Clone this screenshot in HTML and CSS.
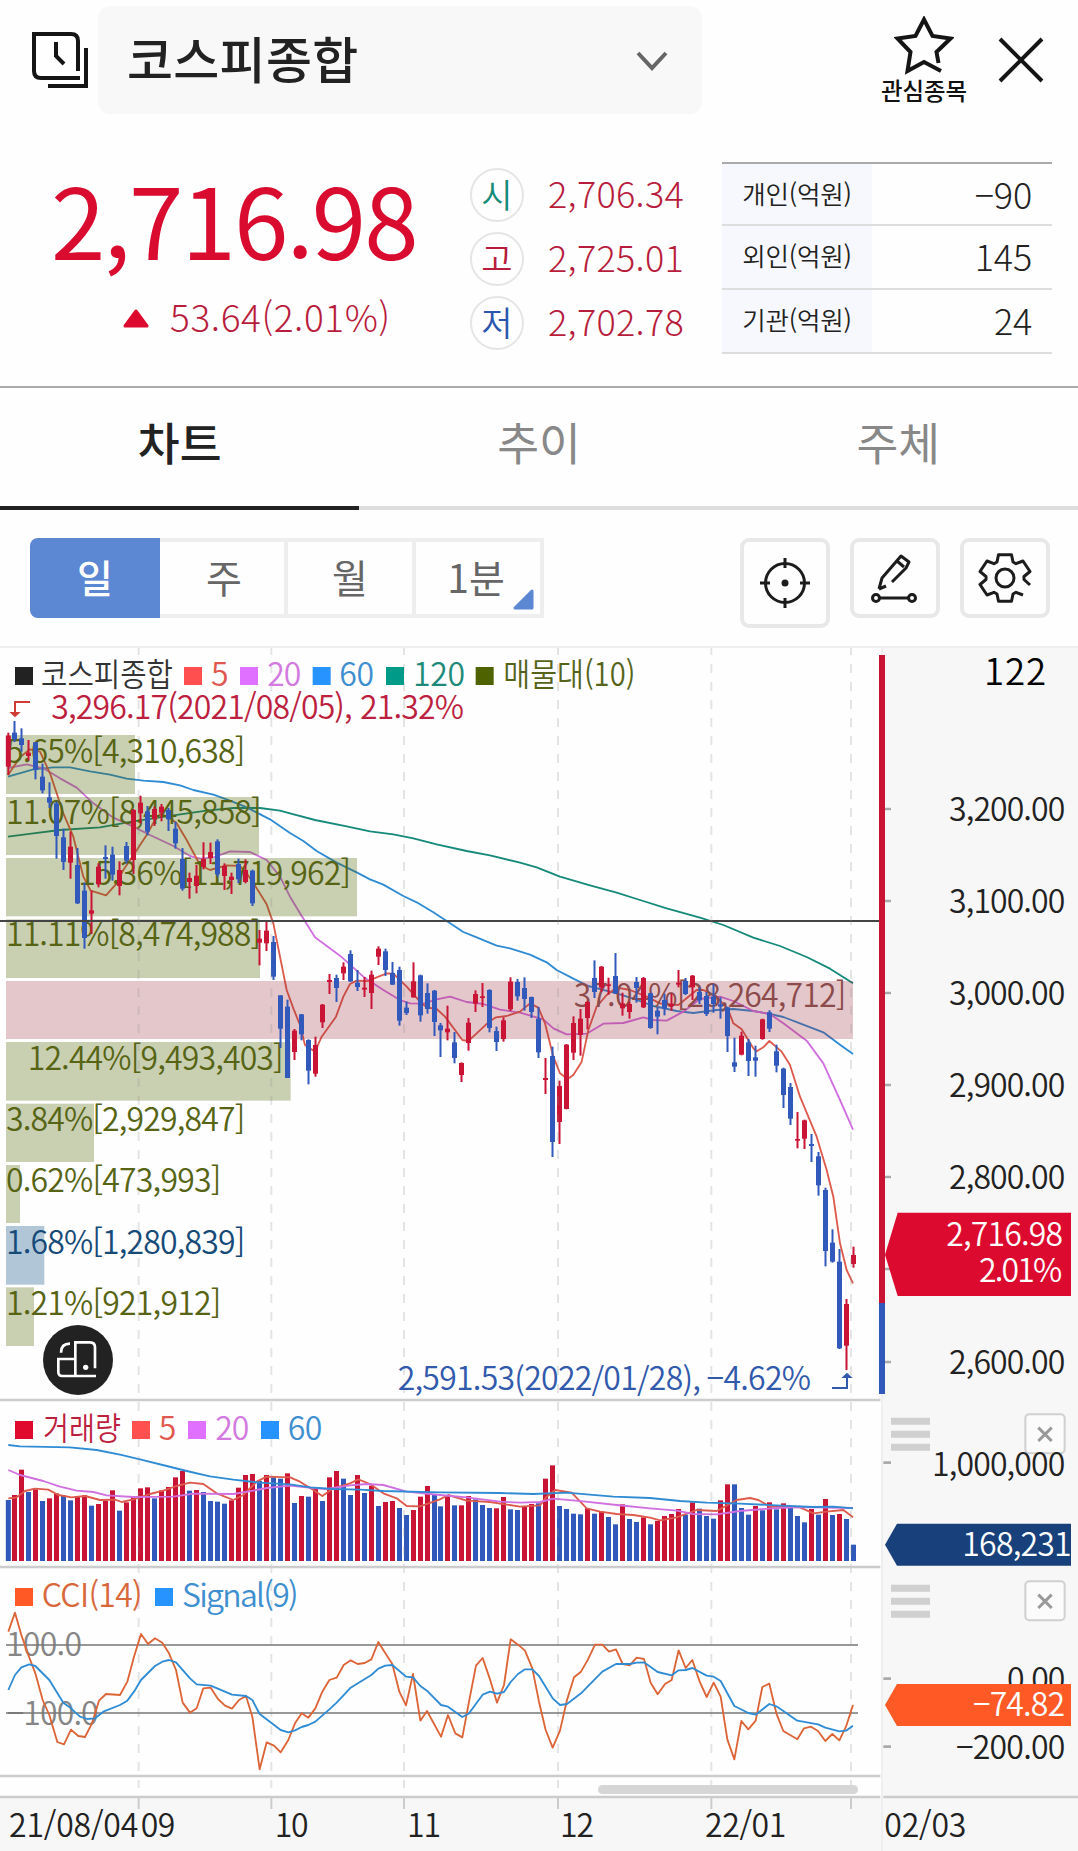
FILE: index.html
```html
<!DOCTYPE html>
<html lang="ko">
<head>
<meta charset="utf-8">
<title>코스피종합</title>
<link rel="stylesheet" href="styles.css">
</head>
<body>
<header class="topbar">
  <svg class="history" width="56" height="56" viewBox="0 0 56 56"><path d="M46 39V9Q46 2 39 2H2V39Q2 46 9 46H48M24 10V24L32 32M54 16V54H16"/></svg>
  <div class="picker"><span>코스피종합</span>
    <svg width="34" height="22" viewBox="0 0 34 22"><path d="M3 3L17 18L31 3"/></svg>
  </div>
  <div class="favorite">
    <svg width="60" height="62" viewBox="0 0 60 62"><path d="M44.500 47L42.500 36L56.500 22.500L38.500 20L30 3.500L21.500 20L3.500 22.500L16.500 36L13.500 55L30 46L47 55"/></svg>
    <span>관심종목</span>
  </div>
  <svg class="close" width="48" height="48" viewBox="0 0 48 48"><path d="M3 3L45 45M45 3L3 45"/></svg>
</header>

<section class="quote">
  <div class="price">
    <div class="now">2,716.98</div>
    <div class="change"><svg width="26" height="19" viewBox="0 0 26 19"><path d="M13 2L24 17H2Z"/></svg><span>53.64(2.01%)</span></div>
  </div>
  <ul class="ohl">
    <li><i class="open">시</i><span>2,706.34</span></li>
    <li><i class="high">고</i><span>2,725.01</span></li>
    <li><i class="low">저</i><span>2,702.78</span></li>
  </ul>
  <dl class="investors">
    <div><dt>개인(억원)</dt><dd>−90</dd></div>
    <div><dt>외인(억원)</dt><dd>145</dd></div>
    <div><dt>기관(억원)</dt><dd>24</dd></div>
  </dl>
</section>

<nav class="tabs"><a class="active">차트</a><a>추이</a><a>주체</a></nav>

<div class="tools">
  <div class="period"><b class="on">일</b><b>주</b><b>월</b><b class="minute">1분<svg width="21" height="21" viewBox="0 0 21 21"><path d="M19 2V19H2Z"/></svg></b></div>
  <div class="actions">
    <span class="tall"><svg width="52" height="52" viewBox="0 0 52 52"><circle cx="26" cy="26" r="19.500"/><circle class="dot" cx="26" cy="26" r="3.500"/><path d="M26 1V11M26 41V51M1 26H11M41 26H51"/></svg></span>
    <span><svg width="52" height="52" viewBox="0 0 52 52"><path d="M10 37L13 26L32 4L40 10L37 16L23 30M28 9L35 15M10 37L17 34M11 46H39"/><circle cx="7" cy="46" r="3.500"/><circle cx="43" cy="46" r="3.500"/></svg></span>
    <span><svg width="56" height="52" viewBox="-28 -26 56 52"><path d="M18 17L11 14.300L8 16L6.500 23.200H-6.500L-8 16L-11 14.300L-18 17L-25 6.500L-19 1.500V-1.500L-25 -6.500L-18 -17L-11 -14.300L-8 -16L-6.500 -23.200H6.500L8 -16L11 -14.300L18 -17L25 -6.500L19 -1.500V1.500L25 7"/><circle r="9"/></svg></span>
  </div>
</div>

<svg class="chart" width="1078" height="1205" viewBox="0 -12 3234 3615">
  <rect class="edge" x="0" y="-12" width="3234" height="6"/>
  <rect class="axis-bg" x="2649" y="-6" width="585" height="3609"/>
  <rect class="axis-bg" x="0" y="3444" width="3234" height="159"/>
  <rect class="edge" x="2643" y="-6" width="6" height="3609"/>

  <g id="averages"></g>

  <g class="profile">
    <rect x="18" y="255" width="387" height="177"/>
    <rect x="18" y="441" width="759" height="174"/>
    <rect x="18" y="624" width="1053" height="175"/>
    <rect x="18" y="808" width="762" height="176"/>
    <rect class="peak" x="18" y="993" width="2541" height="174"/>
    <rect x="18" y="1176" width="854" height="176"/>
    <rect x="18" y="1361" width="264" height="175"/>
    <rect x="18" y="1545" width="42" height="174"/>
    <rect class="current" x="18" y="1728" width="115" height="176"/>
    <rect x="18" y="1912" width="84" height="176"/>
  </g>
  <g class="label olive">
    <text x="18" y="338" textLength="718">5.65%[4,310,638]</text>
    <text x="18" y="521" textLength="767">11.07%[8,445,858]</text>
    <text x="235" y="706" textLength="818">15.36%[11,719,962]</text>
    <text x="18" y="889" textLength="765">11.11%[8,474,988]</text>
    <text class="brown" x="1721" y="1071" textLength="818">37.04%[28,264,712]</text>
    <text x="83" y="1259" textLength="768">12.44%[9,493,403]</text>
    <text x="18" y="1442" textLength="718">3.84%[2,929,847]</text>
    <text x="18" y="1625" textLength="646">0.62%[473,993]</text>
    <text class="navy" x="18" y="1811" textLength="718">1.68%[1,280,839]</text>
    <text x="18" y="1994" textLength="646">1.21%[921,912]</text>
  </g>

  <g id="candles"></g>
  <g id="volumes"></g>
  <g id="volume-averages"></g>
  <path class="base" d="M0 813H2637"/>

  <path class="grid" d="M416 -6V3414M814 -6V3414M1212 -6V3414M1674 -6V3414M2134 -6V3414M2553 -6V3414"/>
  <path class="sep" d="M0 2250H2641M0 2751H2641M0 3378H2641M0 3441H2641M2650 3441H3234"/>
  <path class="sep thin" d="M416 3442V3477M814 3442V3477M1212 3442V3477M1674 3442V3477M2134 3442V3477M2553 3442V3477"/>
  <rect class="scroll" x="1794" y="3405" width="780" height="27" rx="13"/>

  <g class="label">
    <rect x="45" y="51" width="54" height="54" fill="#222"/><text x="123" y="107" textLength="396" lengthAdjust="spacingAndGlyphs" fill="#333">코스피종합</text>
    <rect x="552" y="51" width="54" height="54" fill="#ff4f4f"/><text x="633" y="107" textLength="51" fill="#e0584f">5</text>
    <rect x="720" y="51" width="54" height="54" fill="#e070ff"/><text x="802" y="107" textLength="102" fill="#d37ae0">20</text>
    <rect x="938" y="51" width="54" height="54" fill="#2693ff"/><text x="1018" y="107" textLength="104" fill="#3f8fd0">60</text>
    <rect x="1158" y="51" width="54" height="54" fill="#009a88"/><text x="1239" y="107" textLength="156" fill="#1f8a7a">120</text>
    <rect x="1427" y="51" width="54" height="54" fill="#4e6200"/><text x="1510" y="107" textLength="396" lengthAdjust="spacingAndGlyphs" fill="#56641a">매물대(10)</text>
    <text x="154" y="206" textLength="1238" fill="#bd1f3f">3,296.17(2021/08/05), 21.32%</text>
    <text x="1193" y="2221" textLength="1240" fill="#3159ac">2,591.53(2022/01/28), −4.62%</text>
    <rect x="45" y="2313" width="54" height="54" fill="#e00a2e"/><text x="129" y="2369" textLength="234" lengthAdjust="spacingAndGlyphs" fill="#bd1f3f">거래량</text>
    <rect x="396" y="2313" width="54" height="54" fill="#ff4f4f"/><text x="476" y="2369" textLength="51" fill="#e0584f">5</text>
    <rect x="564" y="2313" width="54" height="54" fill="#e070ff"/><text x="646" y="2369" textLength="102" fill="#d37ae0">20</text>
    <rect x="783" y="2313" width="54" height="54" fill="#2693ff"/><text x="863" y="2369" textLength="104" fill="#3f8fd0">60</text>
    <rect x="45" y="2814" width="54" height="54" fill="#ff5a26"/><text x="125" y="2870" textLength="303" fill="#d8683c">CCI(14)</text>
    <rect x="465" y="2814" width="54" height="54" fill="#2693ff"/><text x="546" y="2870" textLength="350" fill="#3f8fd0">Signal(9)</text>
    <text x="18" y="3018" textLength="228" fill="#858585">100.0</text>
    <text x="20" y="3225" textLength="276" fill="#858585">−100.0</text>
  </g>
  <path d="M90 156H45V190" stroke="#cf3c33" stroke-width="6" fill="none"/><path d="M28 186H62L45 202Z" fill="#cf3c33"/>
  <path d="M2496 2214H2541V2180" stroke="#3159ac" stroke-width="6" fill="none"/><path d="M2524 2184H2558L2541 2168Z" fill="#3159ac"/>

  <path class="level" d="M18 2985H2574M18 3189H2574"/>
  <g id="cci"></g>

  <rect x="2637" y="15" width="18" height="1946" fill="#c91436"/>
  <rect x="2637" y="1959" width="18" height="273" fill="#3059bb"/>
  <path class="tick" d="M2655 477H2673M2655 753H2673M2655 1029H2673M2655 1305H2673M2655 1581H2673M2655 1857H2673M2655 2136H2673M2650 2438H2673M2650 3086H2673M2650 3290H2673"/>

  <g class="label axis">
    <text class="count" x="2952" y="106" textLength="186">122</text>
    <text x="2847" y="514" textLength="349">3,200.00</text>
    <text x="2847" y="790" textLength="349">3,100.00</text>
    <text x="2847" y="1066" textLength="349">3,000.00</text>
    <text x="2847" y="1342" textLength="349">2,900.00</text>
    <text x="2847" y="1618" textLength="349">2,800.00</text>
    <text x="2847" y="2173" textLength="349">2,600.00</text>
  </g>
  <g class="handle">
    <path d="M2673 2314H2790M2673 2353H2790M2673 2392H2790M2673 2815H2790M2673 2854H2790M2673 2893H2790"/>
    <rect x="3076" y="2293" width="118" height="117" rx="12"/><path class="x" d="M3115 2333L3155 2373M3155 2333L3115 2373"/>
    <rect x="3076" y="2794" width="118" height="117" rx="12"/><path class="x" d="M3115 2834L3155 2874M3155 2834L3115 2874"/>
  </g>
  <g class="label axis">
    <text x="2796" y="2477" textLength="400">1,000,000</text>
    <text x="3021" y="3124" textLength="175">0.00</text>
    <text x="2868" y="3328" textLength="328">−200.00</text>
    <text x="27" y="3560" textLength="388">21/08/04</text>
    <text x="422" y="3560" textLength="104">09</text>
    <text x="824" y="3560" textLength="102">10</text>
    <text x="1221" y="3560" textLength="102">11</text>
    <text x="1680" y="3560" textLength="102">12</text>
    <text x="2115" y="3560" textLength="244">22/01</text>
    <text x="2653" y="3560" textLength="246">02/03</text>
  </g>
  <path d="M2655 1814L2693 1688H3213V1938H2693Z" fill="#dd0a2f"/>
  <path d="M2655 2684L2691 2621H3213V2747H2691Z" fill="#18407a"/>
  <path d="M2655 3165L2691 3102H3213V3228H2691Z" fill="#ff5926"/>
  <g class="label tag">
    <text x="2839" y="1787" textLength="350">2,716.98</text>
    <text x="2937" y="1896" textLength="250">2.01%</text>
    <text x="2887" y="2719" textLength="328">168,231</text>
    <text x="2919" y="3199" textLength="276">−74.82</text>
  </g>

  <g class="floating"><circle cx="234" cy="2130" r="105"/><path d="M183 2108Q183 2081 210 2081M226 2127H175V2166Q175 2178 187 2178H288M226 2178V2077H270Q285 2077 285 2092V2155"/><circle class="dot" cx="257" cy="2152" r="8"/></g>
</svg>
<script src="script.js"></script>
</body>
</html>
```

FILE: styles.css
```css
* { box-sizing: border-box; margin: 0; padding: 0; }
body { width: 1078px; height: 1851px; overflow: hidden; background: #fefefe; color: #222; font-family: "Noto Sans CJK KR", "Noto Sans", sans-serif; font-weight: 300; }
svg { display: block; flex: none; }

.topbar { display: flex; align-items: flex-start; height: 162px; padding: 6px 33px 0 32px; }
.topbar path { fill: none; stroke: #151515; stroke-width: 4; }
.history { margin-top: 26px; }
.picker { display: flex; align-items: center; justify-content: space-between; width: 604px; height: 108px; margin-left: 10px; padding: 2px 33px 0 29px; border-radius: 12px; background: #f8f8f8; }
.picker span { margin-top: -8px; font-size: 50px; font-weight: 500; letter-spacing: .3px; line-height: 100px; }
.picker path { stroke: #666; }
.favorite { display: flex; flex-direction: column; align-items: center; width: 90px; margin-left: 177px; padding-top: 10px; }
.favorite span { margin-top: -4px; font-size: 23.4px; font-weight: 500; line-height: 32px; white-space: nowrap; color: #111; }
.close { margin: 30px 0 0 28px; }

.quote { display: flex; height: 224px; }
.price { width: 470px; }
.now { height: 109px; padding: 6px 0 0 51px; font-size: 98px; font-weight: 400; line-height: 98px; letter-spacing: -1.9px; color: #d90b2f; }
.change { display: flex; align-items: center; gap: 21px; height: 74px; padding: 20px 0 0 123px; font-size: 37px; line-height: 48px; letter-spacing: .6px; color: #b81c3c; }
.change span { margin-top: -5px; }
.change path { fill: #dd0a2f; stroke: #dd0a2f; stroke-width: 3; stroke-linejoin: round; }
.ohl { width: 252px; list-style: none; padding-top: 1px; }
.ohl li { display: flex; align-items: center; gap: 24px; height: 64px; font-size: 36px; color: #b81c3c; letter-spacing: .3px; }
.ohl span { margin-top: -6px; line-height: 52px; }
.ohl i { width: 54px; height: 54px; border: 2px solid #e5e5e5; border-radius: 50%; font-style: normal; font-size: 34px; font-weight: 350; line-height: 47px; text-align: center; letter-spacing: 0; }
.open { color: #148a78; } .high { color: #b81c3c; } .low { color: #2b56ae; }
.investors { width: 330px; height: 191px; border-top: 2px solid #aaa; }
.investors div { display: flex; height: 64px; border-bottom: 2px solid #ddd; line-height: 58px; }
.investors div:first-child { height: 62px; }
.investors dt { width: 150px; background: #f7f8fd; font-size: 25.5px; font-weight: 350; text-align: center; letter-spacing: -.2px; }
.investors dd { flex: 1; padding-right: 20px; font-size: 36px; text-align: right; letter-spacing: -.2px; }

.tabs { display: flex; height: 124px; border-top: 2px solid #aaa; }
.tabs a { flex: 1; border-bottom: 4px solid #ddd; text-align: center; font-size: 45.5px; font-weight: 400; line-height: 107px; color: #888; }
.tabs .active { border-color: #222; color: #222; font-weight: 500; }

.tools { display: flex; justify-content: space-between; height: 136px; padding: 28px 28px 0 30px; }
.period { display: flex; width: 514px; height: 80px; border: 4px solid #eee; border-left: 0; border-radius: 8px 0 0 8px; }
.period b { position: relative; flex: 0 0 128px; border-left: 4px solid #eee; font-size: 39px; font-weight: 400; line-height: 69px; text-align: center; color: #666; }
.period .on { flex: 0 0 130px; margin: -4px 0; border: 0; border-radius: 8px 0 0 8px; background: #5b87d3; color: #fff; line-height: 77px; font-weight: 500; }
.period .on + b { flex-basis: 124px; border-left: 0; padding-left: 4px; }
.period .minute { padding-right: 4px; }
.minute svg { position: absolute; right: 6px; bottom: 4px; }
.minute path { fill: #5b87d3; stroke: #5b87d3; stroke-width: 3; stroke-linejoin: round; }
.actions { display: flex; gap: 20px; }
.actions span { display: flex; align-items: center; justify-content: center; width: 90px; height: 80px; border: 4px solid #e8e8e8; border-radius: 9px; }
.actions .tall { height: 90px; }
.actions path, .actions circle { fill: none; stroke: #1c1c1c; stroke-width: 3; stroke-linejoin: round; }
.actions .dot { fill: #1c1c1c; stroke: none; }

.edge { fill: #efefef; }
.axis-bg { fill: #f7f7f7; }
.grid { fill: none; stroke: #888; stroke-opacity: .22; stroke-width: 6; stroke-dasharray: 27 27; stroke-dashoffset: 6; }
.sep { fill: none; stroke: #ccc; stroke-width: 8; }
.sep.thin { stroke-width: 6; }
.scroll { fill: #d6d6d6; }
.base { stroke: #444; stroke-width: 6; }
.level { stroke: #777; stroke-width: 5; }
.tick { stroke: #aaa; stroke-width: 8; }
.profile rect { fill: #506400; fill-opacity: .3; }
.profile .peak { fill: #932434; fill-opacity: .25; }
.profile .current { fill: #004a80; }
.label { font-size: 96px; font-weight: 350; }
.olive { fill: #566414; }
.brown { fill: #8c4a4a; }
.navy { fill: #164a78; }
.axis { fill: #222; }
.axis .count { font-size: 110px; fill: #000; }
.tag { fill: #fff; }
.handle path { stroke: #d0d0d0; stroke-width: 21; }
.handle rect { fill: #fbfbfb; stroke: #d0d0d0; stroke-width: 6; }
.handle .x { stroke: #999; stroke-width: 9; }
.line { fill: none; stroke-width: 5.5; stroke-linejoin: round; }
.up { fill: #c91436; }
.down { fill: #3059bb; }
.floating circle { fill: #222; }
.floating path { fill: none; stroke: #fff; stroke-width: 8; }
.floating .dot { fill: #fff; }
```

FILE: script.js
```js
// All chart values are in thirds of a pixel, measured down from the top of the price pane.
const NS = 'http://www.w3.org/2000/svg';
const VOLUME_TOP = 2220;

function add(parent, tag, attrs) {
  const el = document.createElementNS(NS, tag);
  for (const key in attrs) el.setAttribute(key, attrs[key]);
  document.getElementById(parent).appendChild(el);
}

function dayX(i) {
  if (i === 0) return 25;
  return i < 62 ? 43.5 + 21 * (i - 1) : 1321.5 + 21 * (i - 62);
}

// direction, high, body top, body bottom, low
const candles = `r248,257,350,375 b213,248,268,276 b235,265,285,305 r270,308,318,332 b277,277,360,388 b341,380,421,430
b397,442,458,474 b455,460,558,626 b536,562,636,660 r545,590,638,686 b594,645,760,762 b698,722,864,896
r722,781,791,852 r640,650,703,712 b586,621,627,686 b590,614,674,692 r634,660,708,736 b576,588,632,640
r477,480,630,672 r437,458,490,520 b468,484,545,556 r470,477,508,528 r462,470,488,514 b474,480,508,543
b515,536,580,596 b594,627,716,722 r668,684,696,746 r645,677,708,730 r577,627,651,658 r578,606,624,642
b568,574,673,680 r640,648,678,720 r668,680,690,732 b626,642,688,700 r628,660,696,700 b659,662,760,768
r840,866,878,946 r816,842,880,903 b858,876,980,990 b1036,1036,1136,1194 b1049,1070,1284,1284 r1137,1142,1206,1230
b1092,1093,1153,1171 b1168,1170,1262,1303 r1160,1185,1271,1280 r1062,1064,1117,1134 r972,990,996,1032 b974,984,1014,1056
r937,950,970,990 b901,912,994,996 b960,998,1011,1023 r981,1013,1019,1041 r962,974,1029,1077 r889,896,920,945
b896,904,960,978 b936,969,1004,1005 b950,960,1112,1127 b1055,1073,1089,1095 r937,994,1042,1043 b974,976,1096,1115
b1000,1029,1077,1091 b1020,1022,1116,1158 b1119,1126,1141,1221 r1067,1136,1147,1171 b1146,1177,1224,1240 r1237,1239,1275,1296
r1104,1118,1179,1202 r1021,1032,1061,1086 r999,1039,1044,1071 b1018,1020,1134,1147 b1130,1143,1176,1203 r1102,1111,1167,1175
r982,995,1078,1083 b987,996,1039,1052 b982,1014,1047,1082 b1040,1041,1086,1104 b1071,1106,1207,1224 r1224,1284,1290,1332
b1190,1218,1476,1521 r1292,1308,1416,1482 r1182,1184,1377,1378 r1099,1119,1208,1230 r1077,1106,1155,1217 r1053,1056,1104,1138
b931,984,1026,1044 r948,950,1013,1025 r983,1003,1008,1034 b909,978,1030,1032 r1028,1060,1075,1097 r1055,1062,1086,1106
b981,996,1014,1058 r981,984,1072,1074 b1028,1030,1134,1136 b1072,1082,1100,1153 b1031,1050,1075,1096 r1030,1062,1068,1082
r960,998,1004,1012 b984,993,1032,1035 r975,977,1012,1050 b1012,1026,1051,1062 b1026,1038,1092,1098 b1003,1040,1062,1088
b1042,1063,1070,1106 b1070,1072,1158,1206 b1163,1237,1250,1266 r1145,1157,1214,1216 b1167,1177,1233,1278 b1187,1222,1232,1280
r1106,1108,1167,1169 b1081,1087,1136,1146 b1184,1204,1247,1267 b1253,1256,1335,1374 b1299,1311,1406,1425 r1386,1467,1472,1495
r1409,1411,1466,1497 b1452,1482,1488,1536 b1506,1519,1606,1637 b1613,1620,1803,1849 b1738,1778,1835,1838 b1797,1835,2095,2097
r1947,1962,2087,2160 r1790,1815,1842,1853`.split(/\s+/);

candles.forEach((c, i) => {
  const cls = c[0] === 'r' ? 'up' : 'down';
  const [high, top, bottom, low] = c.slice(1).split(',').map(Number);
  add('candles', 'rect', { class: cls, x: dayX(i) - 3, y: high, width: 6, height: low - high });
  add('candles', 'rect', { class: cls, x: dayX(i) - 7.5, y: top, width: 15, height: bottom - top });
});

const volumes = `b330 r315 r239 b306 r298 b333 r325 r310 b316 b331 r318 r316 b347 r342 r332 r301 b362 r337 r320 r295 r292 b325
r301 r291 r262 r243 b302 r300 b306 b333 b335 b341 r331 r293 r255 r252 b273 r255 b262 b266 r250 b339 r318 b320 r296 b333 r262
r243 b266 b315 r255 b309 r287 b348 r336 r333 b354 b375 r360 r320 r288 b312 b349 r316 b346 r346 r318 b328 b345 b354 r355 r321
b358 b360 r348 r342 b340 r266 r226 b348 b357 b371 b373 r355 b371 r365 b381 b403 r343 b387 b396 r382 b403 r393 r378 r372 r357
b374 r337 b356 b378 b386 r331 r283 b283 b354 b374 r348 b361 r337 b358 r340 b352 b378 b397 r357 b374 r327 b375 r372 b387 b464`.split(/\s+/);

volumes.forEach((v, i) => {
  const top = +v.slice(1);
  add('volumes', 'rect', { class: v[0] === 'r' ? 'up' : 'down', x: dayX(i) - 7.5, y: VOLUME_TOP + top, width: 15, height: 513 - top });
});

function line(parent, color, points, offset = 0) {
  const pts = points.trim().split(/\s+/).map(p => {
    const [x, y] = p.split(',').map(Number);
    return x + ',' + (y + offset);
  }).join(' ');
  add(parent, 'polyline', { class: 'line', stroke: color, points: pts });
}

const MA5 = '#dd5a4c', MA20 = '#d070e0', MA60 = '#2f8bd4', MA120 = '#15897a';

line('averages', MA120, `24,560 100,550 180,540 300,532 400,514 520,496 620,482 700,474 780,474 840,482 870,490 945,510 1040,529
1110,544 1180,553 1240,565 1310,583 1400,603 1470,616 1560,638 1610,652 1680,680 1770,706 1850,728 1920,750 2000,775 2100,803
2170,825 2260,863 2340,888 2420,921 2490,956 2540,988 2559,1000`);
line('averages', MA60, `24,380 100,358 160,352 210,352 270,364 330,374 380,386 430,392 490,396 540,406 580,420 640,434 690,452
740,472 810,508 870,549 910,573 950,603 1010,638 1070,667 1110,688 1150,704 1210,738 1250,757 1300,787 1340,813 1390,846
1430,862 1490,887 1530,895 1590,914 1640,937 1670,960 1720,986 1765,1008 1850,1030 1900,1046 1960,1068 2030,1083 2080,1089
2150,1080 2200,1077 2260,1083 2310,1092 2350,1101 2400,1120 2470,1147 2520,1184 2559,1212`);
line('averages', MA20, `24,354 80,343 130,355 180,385 230,413 280,460 340,503 400,530 450,555 520,588 570,618 600,626 640,622
690,604 750,606 800,630 840,680 870,740 900,790 945,862 1020,917 1090,980 1150,1020 1200,1050 1230,1060 1270,1061 1310,1048
1350,1040 1400,1056 1450,1062 1500,1079 1560,1088 1630,1108 1660,1135 1700,1153 1760,1151 1810,1121 1870,1119 1930,1102
1960,1110 2000,1112 2050,1085 2100,1047 2160,1040 2200,1053 2260,1083 2310,1092 2350,1120 2420,1172 2470,1240 2520,1350 2559,1439`);
line('averages', MA5, `24,375 60,322 90,298 120,305 150,370 190,490 220,560 250,680 272,722 318,736 350,700 370,660 405,608
440,555 465,510 480,492 505,500 530,520 560,570 600,645 630,660 680,646 720,648 740,670 770,715 800,763 820,820 860,1020
880,1075 900,1125 915,1185 945,1205 965,1160 1008,1100 1030,1040 1050,1002 1070,992 1105,993 1130,982 1160,970 1180,971
1220,1010 1260,1055 1280,1072 1310,1077 1335,1100 1365,1140 1387,1170 1405,1173 1430,1150 1465,1117 1488,1102 1520,1098
1560,1085 1590,1060 1615,1073 1635,1120 1660,1220 1680,1270 1703,1287 1720,1275 1745,1235 1765,1140 1790,1070 1820,1035
1850,1013 1890,1020 1940,1040 1980,1060 2035,1065 2090,1020 2110,1020 2150,1040 2185,1080 2200,1120 2225,1138 2260,1195
2270,1204 2290,1192 2308,1173 2345,1205 2370,1245 2400,1340 2450,1460 2480,1560 2500,1640 2520,1780 2540,1860 2559,1900`);

line('volume-averages', MA5, `25,325 50,322 75,303 105,296 145,299 175,315 215,322 255,318 300,330 345,329 365,336 400,328 450,312
490,302 530,288 570,278 610,282 650,310 700,330 730,315 770,275 800,260 870,262 900,275 940,300 967,318 1000,295 1050,280
1075,268 1110,282 1150,310 1190,325 1220,348 1260,349 1320,328 1345,315 1400,332 1470,336 1560,350 1620,346 1640,320 1665,300
1715,308 1760,355 1800,365 1850,372 1900,375 1950,383 1980,391 2030,382 2090,360 2150,363 2210,330 2250,324 2275,330 2310,350
2400,352 2440,370 2480,365 2530,360 2559,382`, VOLUME_TOP);
line('volume-averages', MA20, `25,240 60,255 130,273 180,290 230,302 280,306 320,316 400,321 520,320 580,311 700,312 760,302
800,294 870,287 940,294 980,297 1050,286 1100,282 1150,285 1220,305 1320,315 1400,322 1500,335 1560,338 1620,336 1660,326
1750,334 1850,345 1950,355 2030,362 2080,372 2150,373 2220,363 2330,354 2400,351 2559,354`, VOLUME_TOP);
line('volume-averages', MA60, `25,165 60,169 210,172 290,180 360,194 420,208 500,228 560,243 630,259 700,269 780,278 870,283
930,292 1000,297 1080,299 1150,303 1320,307 1500,309 1600,312 1700,308 1760,313 1840,320 1950,324 2040,333 2120,338 2220,341
2330,346 2440,351 2500,350 2559,355`, VOLUME_TOP);

line('cci', '#dc6436', `25,725 45,668 64,735 85,795 106,850 128,930 148,975 172,1056 192,1063 213,1019 235,1038 255,1041 276,1000
297,932 318,912 360,915 382,875 402,800 423,732 444,762 465,745 487,758 507,790 528,840 548,938 570,968 590,955 610,895
632,893 654,927 675,947 696,956 717,930 738,918 757,980 779,1138 800,1057 822,1067 842,1087 865,1050 885,1000 905,970 925,983
946,955 967,905 988,870 1010,863 1031,825 1052,811 1073,822 1094,819 1114,808 1135,756 1156,790 1177,822 1198,905 1218,946
1239,852 1261,992 1281,963 1323,1040 1344,975 1366,1030 1387,1042 1407,935 1428,827 1448,804 1470,868 1491,938 1512,885
1532,748 1554,764 1575,782 1597,835 1617,935 1637,1020 1658,1073 1680,1022 1701,930 1722,862 1743,845 1764,808 1785,764
1807,764 1827,785 1848,778 1868,822 1889,826 1910,803 1932,807 1952,878 1973,913 1995,882 2015,870 2036,781 2057,834 2077,810
2099,875 2120,921 2141,878 2162,920 2182,1048 2203,1108 2224,993 2245,1018 2267,992 2287,891 2308,881 2329,970 2350,1023
2392,1048 2412,1015 2433,1010 2454,1023 2476,1053 2497,1032 2518,1051 2538,1010 2559,945`, VOLUME_TOP);
line('cci', MA60, `25,900 45,855 64,832 88,823 106,828 148,870 190,938 213,955 240,980 262,987 285,985 310,965 360,945 382,932
402,905 423,870 465,828 487,815 507,810 528,817 570,865 590,883 632,887 696,914 738,918 757,930 779,972 842,1020 865,1027
885,1021 905,1011 925,1005 946,995 988,958 1010,938 1052,893 1114,855 1135,836 1156,827 1177,825 1218,860 1239,862 1261,888
1281,902 1323,945 1344,950 1387,981 1407,970 1448,914 1470,905 1491,911 1512,906 1532,876 1554,852 1575,838 1597,838 1617,858
1658,925 1680,945 1701,942 1743,910 1807,845 1848,822 1889,822 1910,818 1932,817 1973,846 2015,856 2036,841 2057,840 2077,834
2120,857 2141,860 2162,873 2203,948 2245,969 2267,974 2308,942 2329,949 2350,963 2392,992 2454,1003 2476,1013 2518,1024
2538,1022 2559,1007`, VOLUME_TOP);
```
